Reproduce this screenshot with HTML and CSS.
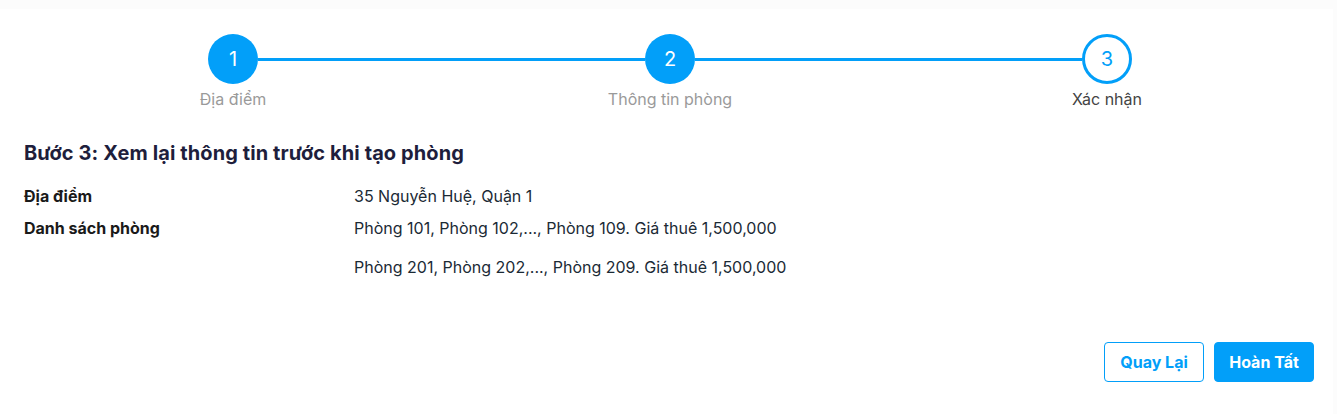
FILE: index.html
```html
<!DOCTYPE html>
<html lang="vi">
<head>
<meta charset="utf-8">
<link rel="stylesheet" href="styles.css">
</head>
<body>
<div class="card">
  <div class="stepper">
    <div class="step done">
      <div class="circle">1</div>
      <div class="label">Địa điểm</div>
    </div>
    <div class="connector"></div>
    <div class="step done">
      <div class="circle">2</div>
      <div class="label">Thông tin phòng</div>
    </div>
    <div class="connector"></div>
    <div class="step current">
      <div class="circle">3</div>
      <div class="label">Xác nhận</div>
    </div>
  </div>

  <h2 class="title">Bước 3: Xem lại thông tin trước khi tạo phòng</h2>

  <div class="info">
    <div class="row">
      <div class="key">Địa điểm</div>
      <div class="val">35 Nguyễn Huệ, Quận 1</div>
    </div>
    <div class="row">
      <div class="key">Danh sách phòng</div>
      <div class="val list">
        <div>Phòng 101, Phòng 102,..., Phòng 109. Giá thuê 1,500,000</div>
        <div>Phòng 201, Phòng 202,..., Phòng 209. Giá thuê 1,500,000</div>
      </div>
    </div>
  </div>

  <div class="actions">
    <button class="btn outline">Quay Lại</button>
    <button class="btn primary">Hoàn Tất</button>
  </div>
</div>
</body>
</html>
```

FILE: styles.css
```css
* { box-sizing: border-box; }
html, body { margin: 0; padding: 0; }
body {
  background: #fcfcfc;
  font-family: Inter, "Noto Sans", sans-serif;
  height: 414px;
  overflow: hidden;
}
.card {
  background: #fff;
  margin: 9px 4px 0 0;
  height: 420px;
  padding: 25px 0 0 0;
}
.stepper {
  display: flex;
  align-items: flex-start;
  margin-left: 208px;
  width: 924px;
}
.step {
  width: 50px;
  display: flex;
  flex-direction: column;
  align-items: center;
  flex: none;
}
.circle {
  width: 50px;
  height: 50px;
  border-radius: 50%;
  display: flex;
  align-items: center;
  justify-content: center;
  font-size: 20px;
  background: #029ff9;
  color: #fff;
}
.step.current .circle {
  background: #fff;
  border: 3px solid #029ff9;
  color: #029ff9;
}
.label {
  white-space: nowrap;
  margin-top: 5px;
  font-size: 16px;
  line-height: 20px;
  color: #9a9a9a;
}
.step.current .label { color: #444; }
.connector {
  flex: 1;
  height: 3px;
  margin-top: 23.5px;
  background: #029ff9;
}
.title {
  margin: 32px 0 0 24px;
  font-size: 20px;
  line-height: 24px;
  font-weight: 700;
  letter-spacing: 0.1px;
  color: #1e1e3c;
}
.info {
  margin: 19px 0 0 24px;
}
.row {
  display: flex;
  margin-bottom: 8px;
}
.key {
  width: 330px;
  font-size: 16px;
  line-height: 24px;
  font-weight: 700;
  color: #1a1a1a;
}
.val {
  font-size: 16px;
  line-height: 24px;
  color: #1b2a35;
}
.list div + div { margin-top: 15px; }
.actions {
  display: flex;
  justify-content: flex-end;
  gap: 10px;
  margin: 63px 19px 0 0;
}
.btn {
  width: 100px;
  height: 40px;
  border-radius: 4px;
  font-family: Inter, "Noto Sans", sans-serif;
  font-size: 16px;
  font-weight: 700;
  cursor: pointer;
  padding: 0;
}
.btn.outline {
  background: #fff;
  border: 1px solid #029ff9;
  color: #029ff9;
}
.btn.primary {
  background: #029ff9;
  border: 1px solid #029ff9;
  color: #fff;
}
```
